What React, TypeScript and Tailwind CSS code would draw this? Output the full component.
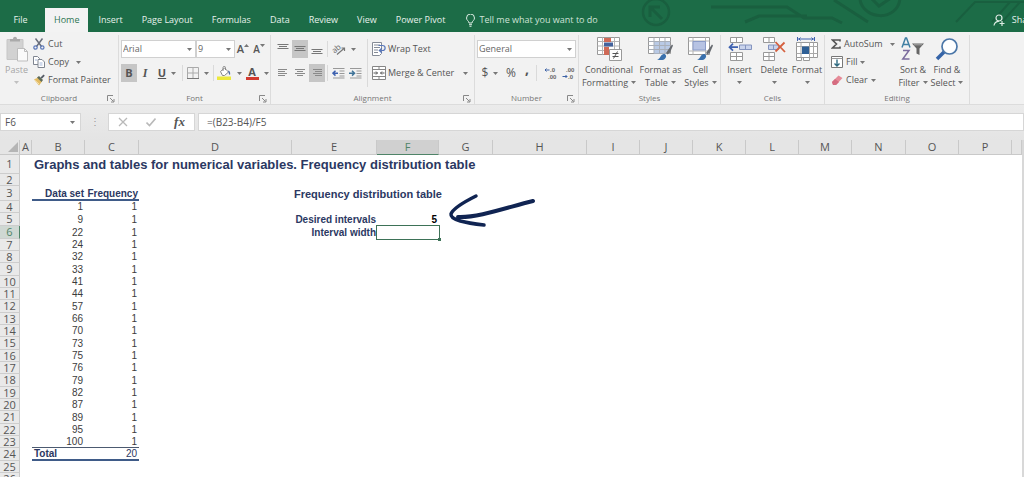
import { type ReactNode } from "react";

const tabs = ["Insert", "Page Layout", "Formulas", "Data", "Review", "View", "Power Pivot"];

const columns = [
  { name: "A", width: "w-3" },
  { name: "B", width: "w-[53px]" },
  { name: "C", width: "w-[54px]" },
  { name: "D", width: "w-[153px]" },
  { name: "E", width: "w-[85px]" },
  { name: "F", width: "w-[62px]" },
  { name: "G", width: "w-[54px]" },
  { name: "H", width: "w-[94px]" },
  { name: "I", width: "w-[53px]" },
  { name: "J", width: "w-[53px]" },
  { name: "K", width: "w-[53px]" },
  { name: "L", width: "w-[53px]" },
  { name: "M", width: "w-[53px]" },
  { name: "N", width: "w-[54px]" },
  { name: "O", width: "w-[53px]" },
  { name: "P", width: "w-[53px]" },
  { name: "", width: "" },
];

const dataSet = [1, 9, 22, 24, 32, 33, 41, 44, 57, 66, 70, 73, 75, 76, 79, 82, 87, 89, 95, 100];

const heading = "text-left text-[#2b3862] font-bold";
const label = "pr-px text-right text-[#2b3862] font-bold";

const cells: Record<string, { value: string; className: string }> = {
  B1: { value: "Graphs and tables for numerical variables. Frequency distribution table", className: `${heading} text-[13px]` },
  B3: { value: "Data set", className: label },
  C3: { value: "Frequency", className: label },
  E3: { value: "Frequency distribution table", className: `${heading} text-[11px]` },
  E5: { value: "Desired intervals", className: label },
  E6: { value: "Interval width", className: label },
  F5: { value: "5", className: "text-right text-black font-bold" },
  B24: { value: "Total", className: heading },
  C24: { value: "20", className: "text-right text-[#2b3862]" },
};

dataSet.forEach((n, i) => {
  cells[`B${i + 4}`] = { value: String(n), className: "text-right" };
  cells[`C${i + 4}`] = { value: "1", className: "text-right" };
});

function rowHeight(row: number) {
  if (row === 1) return "h-[19px]";
  if (row === 3) return "h-[15px]";
  if (row === 5 || (row > 4 && row % 3 === 0)) return "h-[13px]";
  return "h-3";
}

function rule(col: string, row: number) {
  if (col !== "B" && col !== "C") return "";
  if (row === 3) return "align-bottom border-b-2 border-[#3f5b88]";
  if (row === 23) return "align-bottom border-b border-[#4c5a70]";
  if (row === 24) return "align-bottom border-b-2 border-[#3f5b88]";
  return "";
}

/* ---------- small pieces ---------- */

function Caret({ className = "" }: { className?: string }) {
  return (
    <svg viewBox="0 0 5 3" className={`h-[3px] w-[5px] shrink-0 ${className}`} aria-hidden="true">
      <path d="M0 0h5L2.5 3z" fill="#777" />
    </svg>
  );
}

function Divider({ className = "h-4" }: { className?: string }) {
  return <span className={`mx-px w-px shrink-0 bg-[#dadada] ${className}`} />;
}

function Group({ title, width, launcher = false, children }: { title: string; width: string; launcher?: boolean; children: ReactNode }) {
  return (
    <section aria-label={title} className={`flex shrink-0 flex-col border-r border-[#dcdcdc] ${width}`}>
      <div className="flex h-14">{children}</div>
      <div className="relative h-[13px] text-center text-[8px] leading-[13px] text-[#777]">
        {title}
        {launcher && (
          <button aria-label={`${title} settings`} className="absolute right-[3px] top-1">
            <svg viewBox="0 0 8 8" className="h-2 w-2" fill="none" stroke="#888">
              <path d="M.5 6V.5H6M3 3l3.5 3.5M7 4v3H4" />
            </svg>
          </button>
        )}
      </div>
    </section>
  );
}

function ToolButton({ title, width = "w-4", active = false, caret = false, children }: { title: string; width?: string; active?: boolean; caret?: boolean; children: ReactNode }) {
  return (
    <button aria-label={title} className={`flex h-[18px] shrink-0 items-center justify-center ${width} ${active ? "bg-[#c6c6c6]" : ""}`}>
      {children}
      {caret && <Caret className="ml-[5px]" />}
    </button>
  );
}

function BigButton({ icon, lines, width, caretBelow = false }: { icon: ReactNode; lines: string[]; width: string; caretBelow?: boolean }) {
  return (
    <button className={`flex shrink-0 flex-col items-center leading-[13px] whitespace-nowrap ${width}`}>
      <span className="flex h-7 items-center">{icon}</span>
      <span>{lines[0]}</span>
      {caretBelow ? (
        <Caret className="mt-[5px]" />
      ) : (
        <span className="flex items-center gap-[3px]">
          {lines[1]}
          <Caret />
        </span>
      )}
    </button>
  );
}

function Picker({ title, value, width }: { title: string; value: string; width: string }) {
  return (
    <span className={`relative flex h-[18px] items-center border border-[#d0d0d0] bg-white ${width}`}>
      <select aria-label={title} defaultValue={value} className="h-full w-full appearance-none bg-transparent pl-px text-[9px] text-[#666]">
        <option>{value}</option>
      </select>
      <Caret className="pointer-events-none absolute right-[3px]" />
    </span>
  );
}

function Lines({ widths, align }: { widths: number[]; align: "start" | "middle" | "end" }) {
  return (
    <svg viewBox="0 0 12 12" className="h-3 w-3" stroke="#8a8a8a">
      {widths.map((w, i) => {
        const x = align === "start" ? 1 : align === "end" ? 11 - w : 6 - w / 2;
        return <path key={i} d={`M${x} ${2.5 + i * 2}h${w}`} />;
      })}
    </svg>
  );
}

function VerticalLines({ top }: { top: number }) {
  return (
    <svg viewBox="0 0 12 14" className="h-[14px] w-3" stroke="#777">
      <path d={`M.5 ${top}h11M2 ${top + 2}h8M.5 ${top + 4}h11`} />
    </svg>
  );
}

/* ---------- ribbon drawings ---------- */

function PasteIcon() {
  return (
    <svg viewBox="0 0 24 26" className="h-[26px] w-6" fill="none">
      <path d="M2 3.500h16v20H2z" fill="#d2d2d2" stroke="#c6c6c6" />
      <path d="M5 5.500V3h3c0-3 4-3 4 0h3v2.500z" fill="#aaa" />
      <path d="M12.500 12.500h7l3 3v9.500h-10z" fill="#fafafa" stroke="#bdbdbd" />
      <path d="M19.500 12.500v3h3" stroke="#bdbdbd" />
    </svg>
  );
}

function CutIcon() {
  return (
    <svg viewBox="0 0 12 12" className="h-3 w-3" fill="none">
      <path d="M2.500.5 8.500 8.500M9.500.5l-6 8" stroke="#6a6f7c" strokeWidth="1.500" />
      <circle cx="2.500" cy="9.500" r="1.700" stroke="#5a76b8" strokeWidth="1.200" />
      <circle cx="9.300" cy="9.500" r="1.700" stroke="#5a76b8" strokeWidth="1.200" />
    </svg>
  );
}

function CopyIcon() {
  return (
    <svg viewBox="0 0 12 12" className="h-3 w-3" fill="#fff" stroke="#7f8590">
      <path d="M.5.5h4l2 2v6h-6z" />
      <path d="M5 3.500h4l2.500 2.500v5.500H5z" />
      <path d="M6.500 7h3M6.500 9h3M2 4h2" stroke="#8ea5d0" strokeWidth=".8" />
    </svg>
  );
}

function PainterIcon() {
  return (
    <svg viewBox="0 0 12 12" className="h-3 w-3">
      <path d="M1 5.500 5 3.500l4 4L6 11.500z" fill="#e3bb62" />
      <path d="m4 3.500 2-1.500 4 4-1.500 2z" fill="#5f6b59" />
      <path d="m7.500 3.500 3-3 1.300 1.300-3 3z" fill="#555b66" />
      <path d="m2 6.500 4 3.500" stroke="#f5e3b4" />
    </svg>
  );
}

function BorderIcon() {
  return (
    <svg viewBox="0 0 12 12" className="h-3 w-3" fill="none" stroke="#aaa">
      <path d="M.5.500h11v11H.5zM6 .5v11M.5 6h11" />
      <path d="M0 11.500h12" stroke="#777" />
    </svg>
  );
}

function FillColorIcon() {
  return (
    <svg viewBox="0 0 15 14" className="h-[14px] w-[15px]" fill="none">
      <path d="M0 10.500h14V14H0z" fill="#ece93c" />
      <path d="M3.500 5.500 7.500 2l4 4-4 3.500h-2z" fill="#fff" stroke="#888" />
      <path d="M6 5V1.500c0-1.500 2.500-1.500 2.500 0V4" stroke="#888" />
      <path d="M11 4.500c2 .5 2.500 2 2 4.500-1-.5-1.500-2-2-4.500z" fill="#4e6ea5" />
    </svg>
  );
}

function OrientationIcon() {
  return (
    <svg viewBox="0 0 14 14" className="h-[14px] w-[14px] overflow-visible" fill="none" stroke="#777">
      <text x="0" y="9" transform="rotate(-40 5 7)" fontSize="8" fill="#666" stroke="none">ab</text>
      <path d="m5 12.500 7.500-6.500M9.500 6h3v3" strokeWidth="1.200" />
    </svg>
  );
}

function IndentIcon({ increase = false }: { increase?: boolean }) {
  return (
    <svg viewBox="0 0 13 12" className="h-3 w-[13px]" fill="none" stroke="#999">
      <path d="M1 1.500h11.500M7.500 4h5M7.500 6.500h5M7.500 9h5M1 11h11.500" />
      {increase ? (
        <path d="M0 6.200h5M3 3.800l2.500 2.400L3 8.600" stroke="#3f7398" strokeWidth="1.500" />
      ) : (
        <path d="M6 6.200H1M3.500 3.800 1 6.200l2.500 2.400" stroke="#3f62b0" strokeWidth="1.500" />
      )}
    </svg>
  );
}

function WrapIcon() {
  return (
    <svg viewBox="0 0 14 14" className="h-[14px] w-[14px]" fill="none" stroke="#858b96">
      <path d="M.5.500h9v11l-2 2h-7z" fill="#fff" />
      <path d="M2 3h6M2 5.500h6M2 8h4M2 10.500h4" />
      <path d="M6.500 3.500h4c3.500 0 3.500 5 0 5H8M9.800 6.200 7.300 8.500l2.500 2.300" stroke="#5877bb" strokeWidth="1.200" />
    </svg>
  );
}

function MergeIcon() {
  return (
    <svg viewBox="0 0 14 14" className="h-[14px] w-[14px]" fill="none" stroke="#858585">
      <path d="M.5.500h13v13H.5zM.5 3.500h13M.5 10.500h13M7 .5v3M7 10.500v3" fill="#fff" />
      <path d="M1.500 7h4M4 5.500 5.500 7 4 8.500M12.500 7h-4M10 5.500 8.500 7 10 8.500" stroke="#555" />
    </svg>
  );
}

function DecimalIcon({ increase = false }: { increase?: boolean }) {
  return (
    <svg viewBox="0 0 12 12" className="h-3 w-3 overflow-visible" fill="none">
      <g fill="#666" fontFamily="Liberation Sans" fontSize="6" fontWeight="bold">
        <text x={increase ? "6" : "4"} y="5">{increase ? ".0" : ".00"}</text>
        <text x={increase ? "4" : "6"} y="12">{increase ? ".00" : ".0"}</text>
      </g>
      {increase ? (
        <path d="M5.500 3H1M2.500 1.500 1 3l1.500 1.500" stroke="#3d62a5" />
      ) : (
        <path d="M.5 9.500H5M3.500 8 5 9.500 3.500 11" stroke="#3d62a5" />
      )}
    </svg>
  );
}

function ConditionalIcon() {
  return (
    <svg viewBox="0 0 25 24" className="h-6 w-[25px]" fill="none">
      <path d="M.5.500h22v17H.5z" fill="#fff" stroke="#999" />
      <path d="M.5 4.500h22M.5 9h22M.5 13.500h22M5.500.5v17M17.500.5v17" stroke="#b5b5b5" />
      <path d="M7 1h7v4H7zM7 10h5v4H7zM7 14h8v4H7z" fill="#cf6a57" />
      <path d="M7 5.500h9v4H7z" fill="#44639d" />
      <path d="M12.500 12.500h12v11h-12z" fill="#fff" stroke="#999" />
      <path d="M15.500 16.500h6M15.500 19.500h6M20.500 14.500l-4 7" stroke="#555" />
    </svg>
  );
}

function Brush() {
  return (
    <>
      <path d="m24 7.500 1 1-3 7-2.500 2-1.500-1.500 2-3z" fill="#666a70" />
      <path d="M9 22.500c3 0 3.500-5 6.500-5.500 2-.3 3.500 2 2 4-1.500 2.500-5 2.500-8.500 1.500z" fill="#3970ad" />
    </>
  );
}

function FormatTableIcon() {
  return (
    <svg viewBox="0 0 25 24" className="h-6 w-[25px]" fill="none">
      <path d="M.5.500h22v16H.5z" fill="#fff" stroke="#999" />
      <path d="M6 5h16v11.500H6z" fill="#b9cae6" />
      <path d="M.5 4.500h22M.5 8.500h22M.5 12.500h22M6 .5v16M11.500.5v16M17 .5v16" stroke="#a9afb9" />
      <Brush />
    </svg>
  );
}

function CellStylesIcon() {
  return (
    <svg viewBox="0 0 25 24" className="h-6 w-[25px]" fill="none">
      <path d="M.5.500h21v17H.5z" fill="#fff" stroke="#999" />
      <path d="M.5 4h21M.5 14h21M5 .5v17M17.500.5v17" stroke="#b5b5b5" />
      <path d="M5 4.500h12.500V13H5z" fill="#b7c3e3" stroke="#8b9cc8" />
      <Brush />
    </svg>
  );
}

function InsertIcon() {
  return (
    <svg viewBox="0 0 24 24" className="h-6 w-6" fill="none">
      <path d="M2.500.500h12v5h-12zM8.500.5v5M2.500 15.500h12v8h-12zM8.500 15.500v8M2.500 19.500h12" fill="#fff" stroke="#999" />
      <path d="M11.500 8h12v4.500h-12zM17.500 8v4.500" fill="#cad4ec" stroke="#8494bf" />
      <path d="M10 10.200H1.500M5 6.700 1.500 10.200 5 13.700" stroke="#3f62b0" strokeWidth="1.700" />
    </svg>
  );
}

function DeleteIcon() {
  return (
    <svg viewBox="0 0 24 24" className="h-6 w-6" fill="none">
      <path d="M1.500.500h11v5h-11zM7 .5v5M1.500 15.500h11v8h-11zM7 15.500v8M1.500 19.500h11" fill="#fff" stroke="#999" />
      <path d="M6.500 8h10v4.500h-10zM11.500 8v4.500" fill="#cad4ec" stroke="#8494bf" />
      <path d="m13.500 5 9.500 10M22.500 5.500l-9 9" stroke="#d5603f" strokeWidth="1.800" />
    </svg>
  );
}

function FormatIcon() {
  return (
    <svg viewBox="0 0 24 25" className="h-[25px] w-6" fill="none">
      <path d="M2.500 0v4M19.500 0v4M3 2h16M5.500.5 4 2l1.500 1.500M16.500.5 18 2l-1.500 1.500" stroke="#3f62b0" />
      <path d="M1.500 5.500h21v15h-21zM1.500 20.500h5v3h-5zM8.500 20.500h6v3h-6z" fill="#fff" stroke="#999" />
      <path d="M1.500 9.500h21M1.500 16.500h21M6 5.500v15M14.500 5.500v15M18.500 5.500v15" stroke="#a8a8a8" />
      <path d="M7 9.500h7V17H7z" fill="#2e5f95" />
    </svg>
  );
}

function SortIcon() {
  return (
    <svg viewBox="0 0 24 24" className="h-6 w-6" fill="none">
      <path d="M1 10.500 4.500 1h1L9 10.500M2.500 7.500h5" stroke="#3f7fa3" strokeWidth="1.500" />
      <path d="M2 13.500h6L1.800 22H8.500" stroke="#7b6c9e" strokeWidth="1.500" />
      <path d="M11 6.500h12L18.500 11.500V18l-3-1.500v-5z" fill="#666" />
      <path d="M13 7.800h8" stroke="#aaa" />
    </svg>
  );
}

function FindIcon() {
  return (
    <svg viewBox="0 0 24 24" className="h-6 w-6" fill="none">
      <path d="m9 15-7 7" stroke="#3564a8" strokeWidth="3.500" />
      <circle cx="14.500" cy="9.500" r="7.500" fill="#fdfeff" stroke="#4a76a8" strokeWidth="1.700" />
    </svg>
  );
}

function FillDownIcon() {
  return (
    <svg viewBox="0 0 12 12" className="h-3 w-3" fill="none">
      <path d="M.5.500h11v11H.5z" fill="#fff" stroke="#777" />
      <path d="M.5 2.500h11" stroke="#999" />
      <path d="M6 3.500V10M3.500 7.500 6 10l2.500-2.500" stroke="#2e6a80" strokeWidth="1.400" />
    </svg>
  );
}

function EraserIcon() {
  return (
    <svg viewBox="0 0 12 12" className="h-3 w-3">
      <path d="M1 8 7.500 1.500 11.500 4 5 11H2z" fill="#e58b98" />
      <path d="m1 8 3-3 4 3-3 3H2z" fill="#d56c80" />
    </svg>
  );
}

function Circuit() {
  return (
    <svg viewBox="0 0 384 32" className="absolute right-0 top-0 h-8 w-96" fill="none" stroke="#195f3f" strokeWidth="3" aria-hidden="true">
      <circle cx="16" cy="12" r="13" strokeWidth="2.500" />
      <path d="m22 19-11-11M10 17V7h10" />
      <path d="M71 7h76l17 11h28l10 5M105 22l14-6h48" />
      <path d="m194 0 34 22M220 0c4 20 37 22 40-1M231-2l8 8 12-8" />
      <path d="m316 22 19-20h50M352 22l18-20M362 22 380 2" strokeWidth="2" />
    </svg>
  );
}

/* ---------- page sections ---------- */

function TitleBar() {
  return (
    <header className="relative flex h-8 items-end overflow-hidden bg-[#1c6c47] text-[#e6f1eb] whitespace-nowrap">
      <Circuit />
      <nav aria-label="Ribbon tabs" className="relative flex h-6 shrink-0 items-stretch gap-px">
        <button className="w-[41px]">File</button>
        <button aria-current="page" className="ml-[3px] bg-[#f3f3f3] px-[9px] text-[#2d7552]">Home</button>
        {tabs.map((tab) => (
          <button key={tab} className="px-[9px]">{tab}</button>
        ))}
      </nav>
      <button className="relative ml-3 flex h-6 shrink-0 items-center gap-1 text-[#cfe3d8]">
        <svg viewBox="0 0 9 13" className="h-[13px] w-[9px]" fill="none" stroke="#dcebe3">
          <path d="M3 9c0-2-2.500-2.500-2.500-5a4 4 0 0 1 8 0C8.500 6.500 6 7 6 9zM3 10.700h3M3.500 12.300h2" />
        </svg>
        Tell me what you want to do
      </button>
      <button className="relative -mr-3 ml-auto flex h-6 shrink-0 items-center gap-[7px]">
        <svg viewBox="0 0 12 12" className="h-3 w-3" fill="none" stroke="#dcebe3" strokeWidth="1.200">
          <circle cx="6" cy="4" r="3" />
          <path d="M1 11.500C1.500 8.500 3.500 7.500 6 7.200M9 7v5M6.500 9.500h5" />
        </svg>
        Share
      </button>
    </header>
  );
}

function Ribbon() {
  return (
    <div className="flex overflow-hidden bg-[#f2f2f2] pt-[3px] whitespace-nowrap">
      <Group title="Clipboard" width="w-[119px]" launcher>
        <button className="flex w-[33px] shrink-0 flex-col items-center leading-[13px] text-[#a5a5a5]">
          <span className="flex h-7 items-center">
            <PasteIcon />
          </span>
          Paste
          <Caret className="mt-[5px] opacity-40" />
        </button>
        <div className="flex flex-col items-start *:flex *:h-[18px] *:items-center *:gap-[3px]">
          <button><CutIcon />Cut</button>
          <button><CopyIcon />Copy<Caret className="ml-1" /></button>
          <button><PainterIcon />Format Painter</button>
        </div>
      </Group>

      <Group title="Font" width="w-[152px]" launcher>
        <div className="flex flex-col pt-[2px] pl-[2px] *:flex *:h-6 *:items-center">
          <div>
            <Picker title="Font name" value="Arial" width="w-[75px]" />
            <Picker title="Font size" value="9" width="w-[39px]" />
            <ToolButton title="Increase font size">
              <span className="text-[11px] font-semibold">A</span>
              <Caret className="-mt-2 rotate-180" />
            </ToolButton>
            <ToolButton title="Decrease font size">
              <span className="text-[10px] font-semibold">A</span>
              <Caret className="-mt-2" />
            </ToolButton>
          </div>
          <div>
            <ToolButton title="Bold" active>
              <span className="text-[11px] font-bold">B</span>
            </ToolButton>
            <ToolButton title="Italic">
              <span className="font-['Liberation_Serif',serif] text-[12px] font-bold italic">I</span>
            </ToolButton>
            <ToolButton title="Underline" width="w-7" caret>
              <span className="text-[11px] font-bold underline">U</span>
            </ToolButton>
            <Divider />
            <ToolButton title="Borders" width="w-7" caret>
              <BorderIcon />
            </ToolButton>
            <Divider />
            <ToolButton title="Fill colour" width="w-7" caret>
              <FillColorIcon />
            </ToolButton>
            <ToolButton title="Font colour" width="w-7" caret>
              <span className="w-[13px] border-b-[3px] border-[#d23a30] text-[11px] leading-[11px] font-bold">A</span>
            </ToolButton>
          </div>
        </div>
      </Group>

      <Group title="Alignment" width="w-[204px]" launcher>
        <div className="flex flex-col pt-[2px] pl-1 *:flex *:h-6 *:items-center *:gap-px">
          <div>
            <ToolButton title="Top align"><VerticalLines top={2.5} /></ToolButton>
            <ToolButton title="Middle align" active><VerticalLines top={4.5} /></ToolButton>
            <ToolButton title="Bottom align"><VerticalLines top={7.5} /></ToolButton>
            <Divider />
            <ToolButton title="Orientation" width="w-7" caret><OrientationIcon /></ToolButton>
          </div>
          <div>
            <ToolButton title="Align left"><Lines widths={[9, 7, 9, 7]} align="start" /></ToolButton>
            <ToolButton title="Center"><Lines widths={[10, 6, 10, 6]} align="middle" /></ToolButton>
            <ToolButton title="Align right" active><Lines widths={[9, 7, 9, 7]} align="end" /></ToolButton>
            <Divider />
            <ToolButton title="Decrease indent"><IndentIcon /></ToolButton>
            <ToolButton title="Increase indent"><IndentIcon increase /></ToolButton>
          </div>
        </div>
        <Divider className="mt-1 ml-1 h-12" />
        <div className="flex grow flex-col pt-[2px] pl-[3px] *:flex *:h-6 *:items-center *:gap-[2px]">
          <button><WrapIcon />Wrap Text</button>
          <button><MergeIcon />Merge &amp; Center<Caret className="mr-[6px] ml-auto" /></button>
        </div>
      </Group>

      <Group title="Number" width="w-[104px]" launcher>
        <div className="flex grow flex-col px-[2px] pt-[2px] *:flex *:h-6 *:items-center">
          <div>
            <Picker title="Number format" value="General" width="w-full" />
          </div>
          <div>
            <ToolButton title="Currency" width="w-[26px]" caret><span className="text-[12px]">$</span></ToolButton>
            <ToolButton title="Percent"><span className="text-[12px]">%</span></ToolButton>
            <ToolButton title="Comma"><span className="mb-2 text-[14px] leading-[8px] font-bold">,</span></ToolButton>
            <Divider />
            <span className="ml-1 flex gap-[2px]">
              <ToolButton title="Increase decimal"><DecimalIcon increase /></ToolButton>
              <ToolButton title="Decrease decimal"><DecimalIcon /></ToolButton>
            </span>
          </div>
        </div>
      </Group>

      <Group title="Styles" width="w-[142px]">
        <BigButton icon={<ConditionalIcon />} lines={["Conditional", "Formatting"]} width="w-[60px]" />
        <BigButton icon={<FormatTableIcon />} lines={["Format as", "Table"]} width="w-[43px]" />
        <BigButton icon={<CellStylesIcon />} lines={["Cell", "Styles"]} width="w-[37px]" />
      </Group>

      <Group title="Cells" width="w-[104px]">
        <BigButton icon={<InsertIcon />} lines={["Insert"]} width="w-[37px]" caretBelow />
        <BigButton icon={<DeleteIcon />} lines={["Delete"]} width="w-8" caretBelow />
        <BigButton icon={<FormatIcon />} lines={["Format"]} width="w-[34px]" caretBelow />
      </Group>

      <Group title="Editing" width="w-[145px]">
        <div className="flex w-[71px] shrink-0 flex-col items-start pl-[6px] *:flex *:h-[18px] *:items-center *:gap-[3px]">
          <button>
            <svg viewBox="0 0 10 10" className="h-[10px] w-[10px]" fill="none" stroke="#555" strokeWidth="1.600">
              <path d="M9 2.500V1H1.500L5.500 5l-4 4H9V7.500" />
            </svg>
            AutoSum
            <Caret className="ml-1" />
          </button>
          <button><FillDownIcon />Fill<Caret /></button>
          <button><EraserIcon />Clear<Caret /></button>
        </div>
        <BigButton icon={<SortIcon />} lines={["Sort &", "Filter"]} width="w-[34px]" />
        <BigButton icon={<FindIcon />} lines={["Find &", "Select"]} width="w-[34px]" />
      </Group>
    </div>
  );
}

function FormulaBar() {
  return (
    <div className="flex border-t border-[#dcdcdc] bg-gradient-to-b from-[#ebebeb] to-[#e4e4e4] pt-2 pb-[9px] text-[10px] text-[#555]">
      <div className="relative flex h-[18px] w-[81px] items-center border border-[#d6d6d6] bg-white">
        <input aria-label="Name box" defaultValue="F6" className="w-full bg-transparent pl-1 outline-none" />
        <Caret className="absolute right-[5px]" />
      </div>
      <span className="w-[27px] text-center leading-4 text-[#999]">⋮</span>
      <div className="flex h-[18px] w-[87px] items-center justify-around border border-[#d6d6d6] bg-white">
        <button aria-label="Cancel">
          <svg viewBox="0 0 10 10" className="h-[10px] w-[10px]" stroke="#b9b9b9" strokeWidth="1.300">
            <path d="m1 1 8 8M9 1 1 9" />
          </svg>
        </button>
        <button aria-label="Enter">
          <svg viewBox="0 0 10 10" className="h-[10px] w-[10px]" fill="none" stroke="#b9b9b9" strokeWidth="1.600">
            <path d="m.5 5.500 3 3L9.500 1.500" />
          </svg>
        </button>
        <button aria-label="Insert function" className="font-['Liberation_Serif',serif] text-[13px] leading-4 font-bold italic">
          fx
        </button>
      </div>
      <input
        aria-label="Formula"
        defaultValue="=(B23-B4)/F5"
        className="ml-[3px] h-[18px] min-w-0 grow border border-[#d6d6d6] bg-white pl-2 outline-none"
      />
    </div>
  );
}

function PointerArrow() {
  return (
    <svg viewBox="0 0 100 40" className="absolute -top-[23px] left-full h-10 w-[100px]" fill="none" stroke="#102452" strokeLinecap="round" aria-hidden="true">
      <path d="M37 6C27 11 14 18 12 24c-1 6 15 9 33 11" strokeWidth="3.500" />
      <path d="M19 27c20 1 50-10 75-16" strokeWidth="4" />
    </svg>
  );
}

function Sheet() {
  return (
    <main className="overflow-hidden border-r-2 border-[#d8d8d8] bg-white">
      <table className="w-full table-fixed border-separate border-spacing-0 font-['Liberation_Sans',sans-serif] text-[10px] leading-[10px] text-[#3c3c3c]">
        <colgroup>
          <col className="w-5" />
          {columns.map((col) => (
            <col key={col.name} className={col.width} />
          ))}
        </colgroup>
        <thead className="font-['Open_Sans',sans-serif] text-[11px] text-[#555]">
          <tr>
            <th className="h-[15px] border-r border-b border-[#c9c9c9] bg-[#e5e5e5] p-0">
              <svg viewBox="0 0 10 10" className="ml-auto h-[10px] w-[12px]" aria-hidden="true">
                <path d="M10 0v10H0z" fill="#b5b5b5" />
              </svg>
            </th>
            {columns.map((col) => (
              <th
                key={col.name}
                scope="col"
                className={`h-[15px] border-r border-b p-0 font-normal ${
                  col.name === "F" ? "border-b-[#4f8468] border-r-[#c9c9c9] bg-[#d0d0d0] text-[#4f8468]" : "border-[#c9c9c9] bg-[#e5e5e5]"
                }`}
              >
                {col.name}
              </th>
            ))}
          </tr>
        </thead>
        <tbody>
          {Array.from({ length: 26 }, (_, i) => i + 1).map((row) => (
            <tr key={row} className={rowHeight(row)}>
              <th
                scope="row"
                className={`border-r border-b border-b-[#cdcdcd] p-0 font-['Open_Sans',sans-serif] text-[11px] font-normal ${
                  row === 6 ? "border-r-[#4f8468] bg-[#cfd8d3] text-[#4f8468]" : "border-r-[#c9c9c9] bg-[#e9e9e9] text-[#555]"
                }`}
              >
                {row}
              </th>
              {columns.map((col) => {
                const id = `${col.name}${row}`;
                const cell = cells[id];
                return (
                  <td key={id} className={`relative px-[2px] py-0 whitespace-nowrap ${cell?.className ?? ""} ${rule(col.name, row)}`}>
                    {cell?.value}
                    {id === "F5" && <PointerArrow />}
                    {id === "F6" && (
                      <span className="absolute -inset-px border border-[#3d7257]">
                        <span className="absolute -right-[2px] -bottom-[2px] h-[3px] w-[3px] bg-[#3d7257]" />
                      </span>
                    )}
                  </td>
                );
              })}
            </tr>
          ))}
        </tbody>
      </table>
    </main>
  );
}

export default function App() {
  return (
    <div className="h-screen overflow-hidden bg-[#e5e5e5] font-['Open_Sans',sans-serif] text-[9px] text-[#555]">
      <TitleBar />
      <Ribbon />
      <FormulaBar />
      <Sheet />
    </div>
  );
}
